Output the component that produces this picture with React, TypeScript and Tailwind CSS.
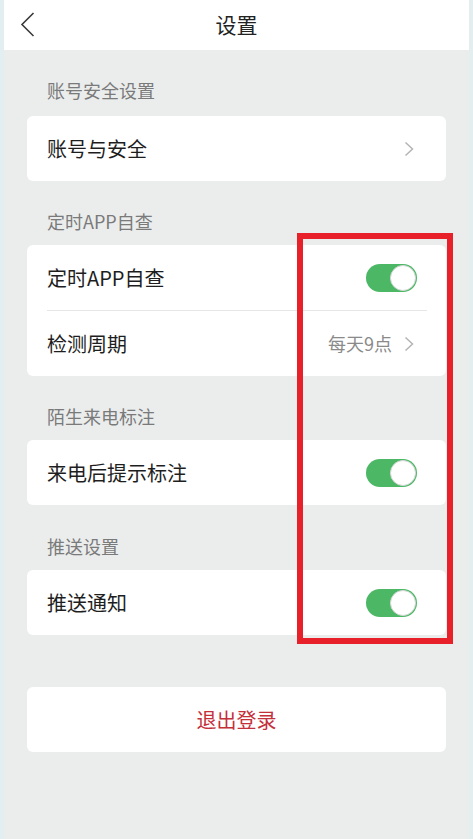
const font = { fontFamily: '"Noto Sans CJK SC", "Noto Sans", sans-serif' };

const Chevron = () => (
  <svg width="10" height="16" viewBox="0 0 10 16" fill="none">
    <polyline points="1.5,1.5 8.5,8 1.5,14.5" stroke="#b4b4b4" strokeWidth="1.5" />
  </svg>
);

const Toggle = () => (
  <div className="flex h-[28px] w-[51px] items-center justify-end rounded-full bg-[#4cb866] pr-[1px]">
    <div className="h-[26px] w-[26px] rounded-full border border-[#d6d6d6] bg-white" />
  </div>
);

const SectionLabel = ({ text, size }: { text: string; size: 'first' | 'mid' | 'tall' }) => (
  <div
    className={`flex items-end px-[20px] text-[18px] leading-[20px] text-[#7a7a7a] ${
      size === 'first' ? 'h-[66px] pb-[16px]' : size === 'tall' ? 'h-[65px] pb-[14px]' : 'h-[64px] pb-[14px]'
    }`}
  >
    {text}
  </div>
);

const Row = ({ label, children }: { label: string; children: React.ReactNode }) => (
  <div className="flex h-[65px] items-center justify-between pl-[20px]">
    <span className="text-[20px] text-[#1e1e1e]">{label}</span>
    {children}
  </div>
);

export default function App() {
  return (
    <div
      className="relative h-[839px] w-[473px] overflow-hidden border-x-[4px] border-[#e2eef0] bg-[#ebeded]"
      style={font}
    >
      <div className="relative flex h-[50px] items-center justify-center bg-white">
        <svg className="absolute left-[16px] top-[12px]" width="16" height="25" viewBox="0 0 16 25" fill="none">
          <polyline points="13.5,1 2,12.5 13.5,24" stroke="#3a3a3a" strokeWidth="1.6" />
        </svg>
        <span className="text-[21px] text-[#222]">设置</span>
      </div>

      <div className="mx-[23px]">
        <SectionLabel text="账号安全设置" size="first" />
        <div className="rounded-[6px] bg-white">
          <Row label="账号与安全">
            <div className="pr-[32px]">
              <Chevron />
            </div>
          </Row>
        </div>

        <SectionLabel text="定时APP自查" size="mid" />
        <div className="rounded-[6px] bg-white">
          <Row label="定时APP自查">
            <div className="pr-[29px]">
              <Toggle />
            </div>
          </Row>
          <div className="ml-[20px] mr-[19px] h-px bg-[#e6e6e6]" />
          <Row label="检测周期">
            <div className="flex items-center gap-[12px] pr-[32px]">
              <span className="text-[18px] text-[#8a8a8a]">每天9点</span>
              <Chevron />
            </div>
          </Row>
        </div>

        <SectionLabel text="陌生来电标注" size="mid" />
        <div className="rounded-[6px] bg-white">
          <Row label="来电后提示标注">
            <div className="pr-[29px]">
              <Toggle />
            </div>
          </Row>
        </div>

        <SectionLabel text="推送设置" size="tall" />
        <div className="rounded-[6px] bg-white">
          <Row label="推送通知">
            <div className="pr-[29px]">
              <Toggle />
            </div>
          </Row>
        </div>

        <div className="mt-[52px] flex h-[65px] items-center justify-center rounded-[6px] bg-white">
          <span className="text-[20px] text-[#c4303a]">退出登录</span>
        </div>
      </div>

      <div className="pointer-events-none absolute left-[293px] top-[233px] h-[411px] w-[156px] border-[6px] border-[#e8202a]" />
    </div>
  );
}
